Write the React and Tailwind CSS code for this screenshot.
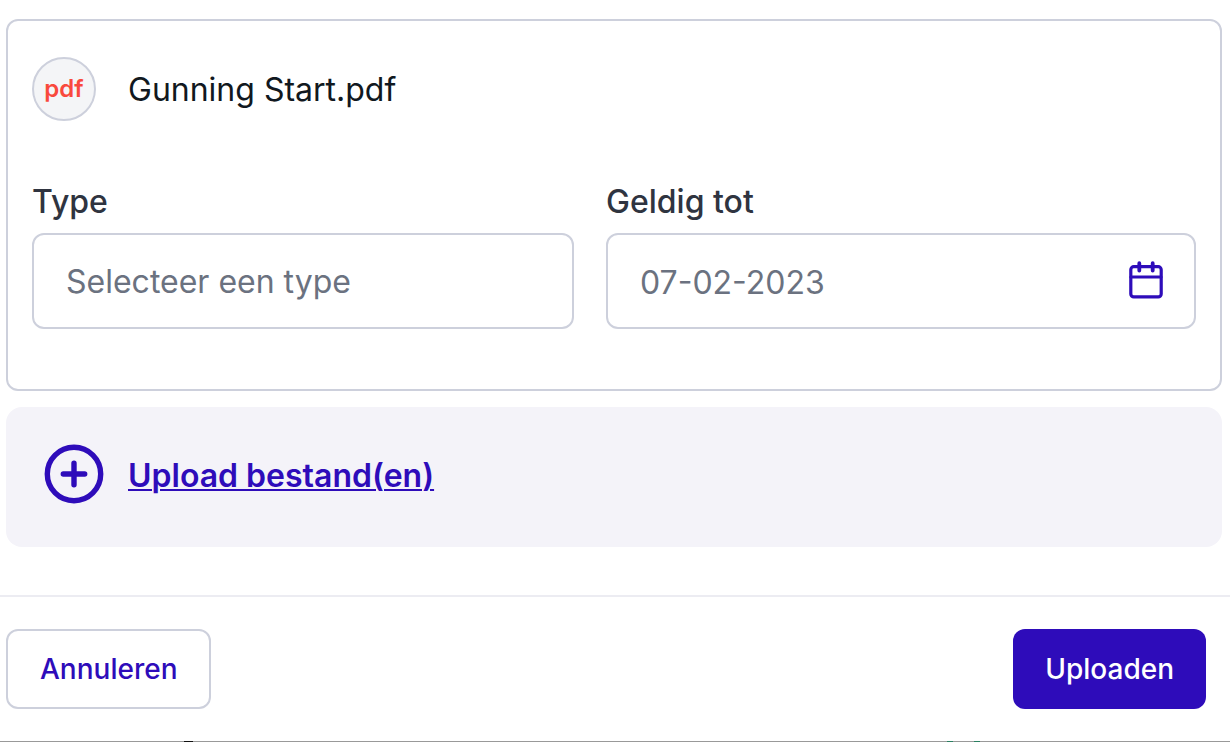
import React, { useState } from "react";

const labelClass = "mb-2.5 block text-[32px] leading-[42px] font-medium text-[#2f3440]";
const fieldClass =
  "h-24 w-full rounded-xl border-2 border-[#cdd0dc] bg-white px-8 pt-0.5 text-[32px] leading-10 text-[#6b7280] outline-none";

function CalendarIcon() {
  return (
    <svg width="36" height="40" viewBox="0 0 36 40" fill="none" stroke="currentColor" strokeWidth="3.2" strokeLinecap="round" strokeLinejoin="round">
      <rect x="2.800" y="5.700" width="30.400" height="30.200" rx="3" />
      <path d="M3 16h30" />
      <path d="M11.300 2.200v7.400M24.700 2.200v7.400" strokeWidth="3.800" />
    </svg>
  );
}

function PlusIcon() {
  return (
    <svg width="60" height="60" viewBox="0 0 60 60" fill="none" stroke="currentColor" strokeWidth="5.4" strokeLinecap="round">
      <circle cx="30" cy="30" r="26.700" />
      <path d="M30 19.300v21.400M19.300 30h21.400" />
    </svg>
  );
}

export default function App() {
  const [type, setType] = useState("");
  const [date, setDate] = useState("07-02-2023");

  return (
    <div className="w-full bg-white font-['Inter',sans-serif]">
      <form onSubmit={(e) => e.preventDefault()}>
        <div className="pl-1.5 pr-2 pt-[19px]">
          <div className="rounded-xl border-2 border-[#cdd0dc] px-6 pt-9 pb-[60px]">
            <div className="flex items-center gap-8">
              <div className="flex size-16 items-center justify-center rounded-full border-2 border-[#cdd0dc] bg-[#f4f5f7] text-2xl font-semibold text-[#f9493d]">
                pdf
              </div>
              <p className="pt-0.5 text-[32px] leading-10 text-[#111820]">Gunning Start.pdf</p>
            </div>

            <div className="mt-[60px] grid grid-cols-[542fr_590fr] gap-8">
              <div>
                <label htmlFor="type" className={labelClass}>
                  Type
                </label>
                <select
                  id="type"
                  value={type}
                  onChange={(e) => setType(e.target.value)}
                  className={`${fieldClass} appearance-none`}
                >
                  <option value="">Selecteer een type</option>
                </select>
              </div>
              <div>
                <label htmlFor="date" className={labelClass}>
                  Geldig tot
                </label>
                <div className="relative">
                  <input
                    id="date"
                    type="text"
                    value={date}
                    onChange={(e) => setDate(e.target.value)}
                    className={fieldClass}
                  />
                  <button type="button" aria-label="Kalender" className="absolute inset-y-0 right-8 flex items-center text-[#2e0cba]">
                    <CalendarIcon />
                  </button>
                </div>
              </div>
            </div>
          </div>

          <div className="mt-4 flex h-[140px] items-center rounded-2xl bg-[#f4f3f9] px-[38px] pb-1.5">
            <a href="#upload" className="flex items-center gap-6 text-[#2e0cba]">
              <PlusIcon />
              <span className="pt-1 text-[32px] leading-10 font-semibold underline decoration-2 underline-offset-2">
                Upload bestand(en)
              </span>
            </a>
          </div>
        </div>

        <div className="mt-12 flex items-center justify-between border-t-2 border-[#ececf2] py-8 pl-1.5 pr-6">
          <button type="button" className="h-20 rounded-xl border-2 border-[#cdd0dc] bg-white px-8 text-[28px] font-medium text-[#2e0cba]">
            Annuleren
          </button>
          <button type="submit" className="h-20 rounded-xl bg-[#2e0cba] px-8 text-[28px] font-medium text-white">
            Uploaden
          </button>
        </div>
      </form>

      {/* edge of the page behind the dialog */}
      <div className="grid h-px grid-cols-[184fr_9px_754fr_6px_21px_6px_250fr] bg-[#999999]">
        <span />
        <span className="bg-[#111111]" />
        <span />
        <span className="bg-[#2a8061]" />
        <span />
        <span className="bg-[#2a8061]" />
        <span />
      </div>
    </div>
  );
}
